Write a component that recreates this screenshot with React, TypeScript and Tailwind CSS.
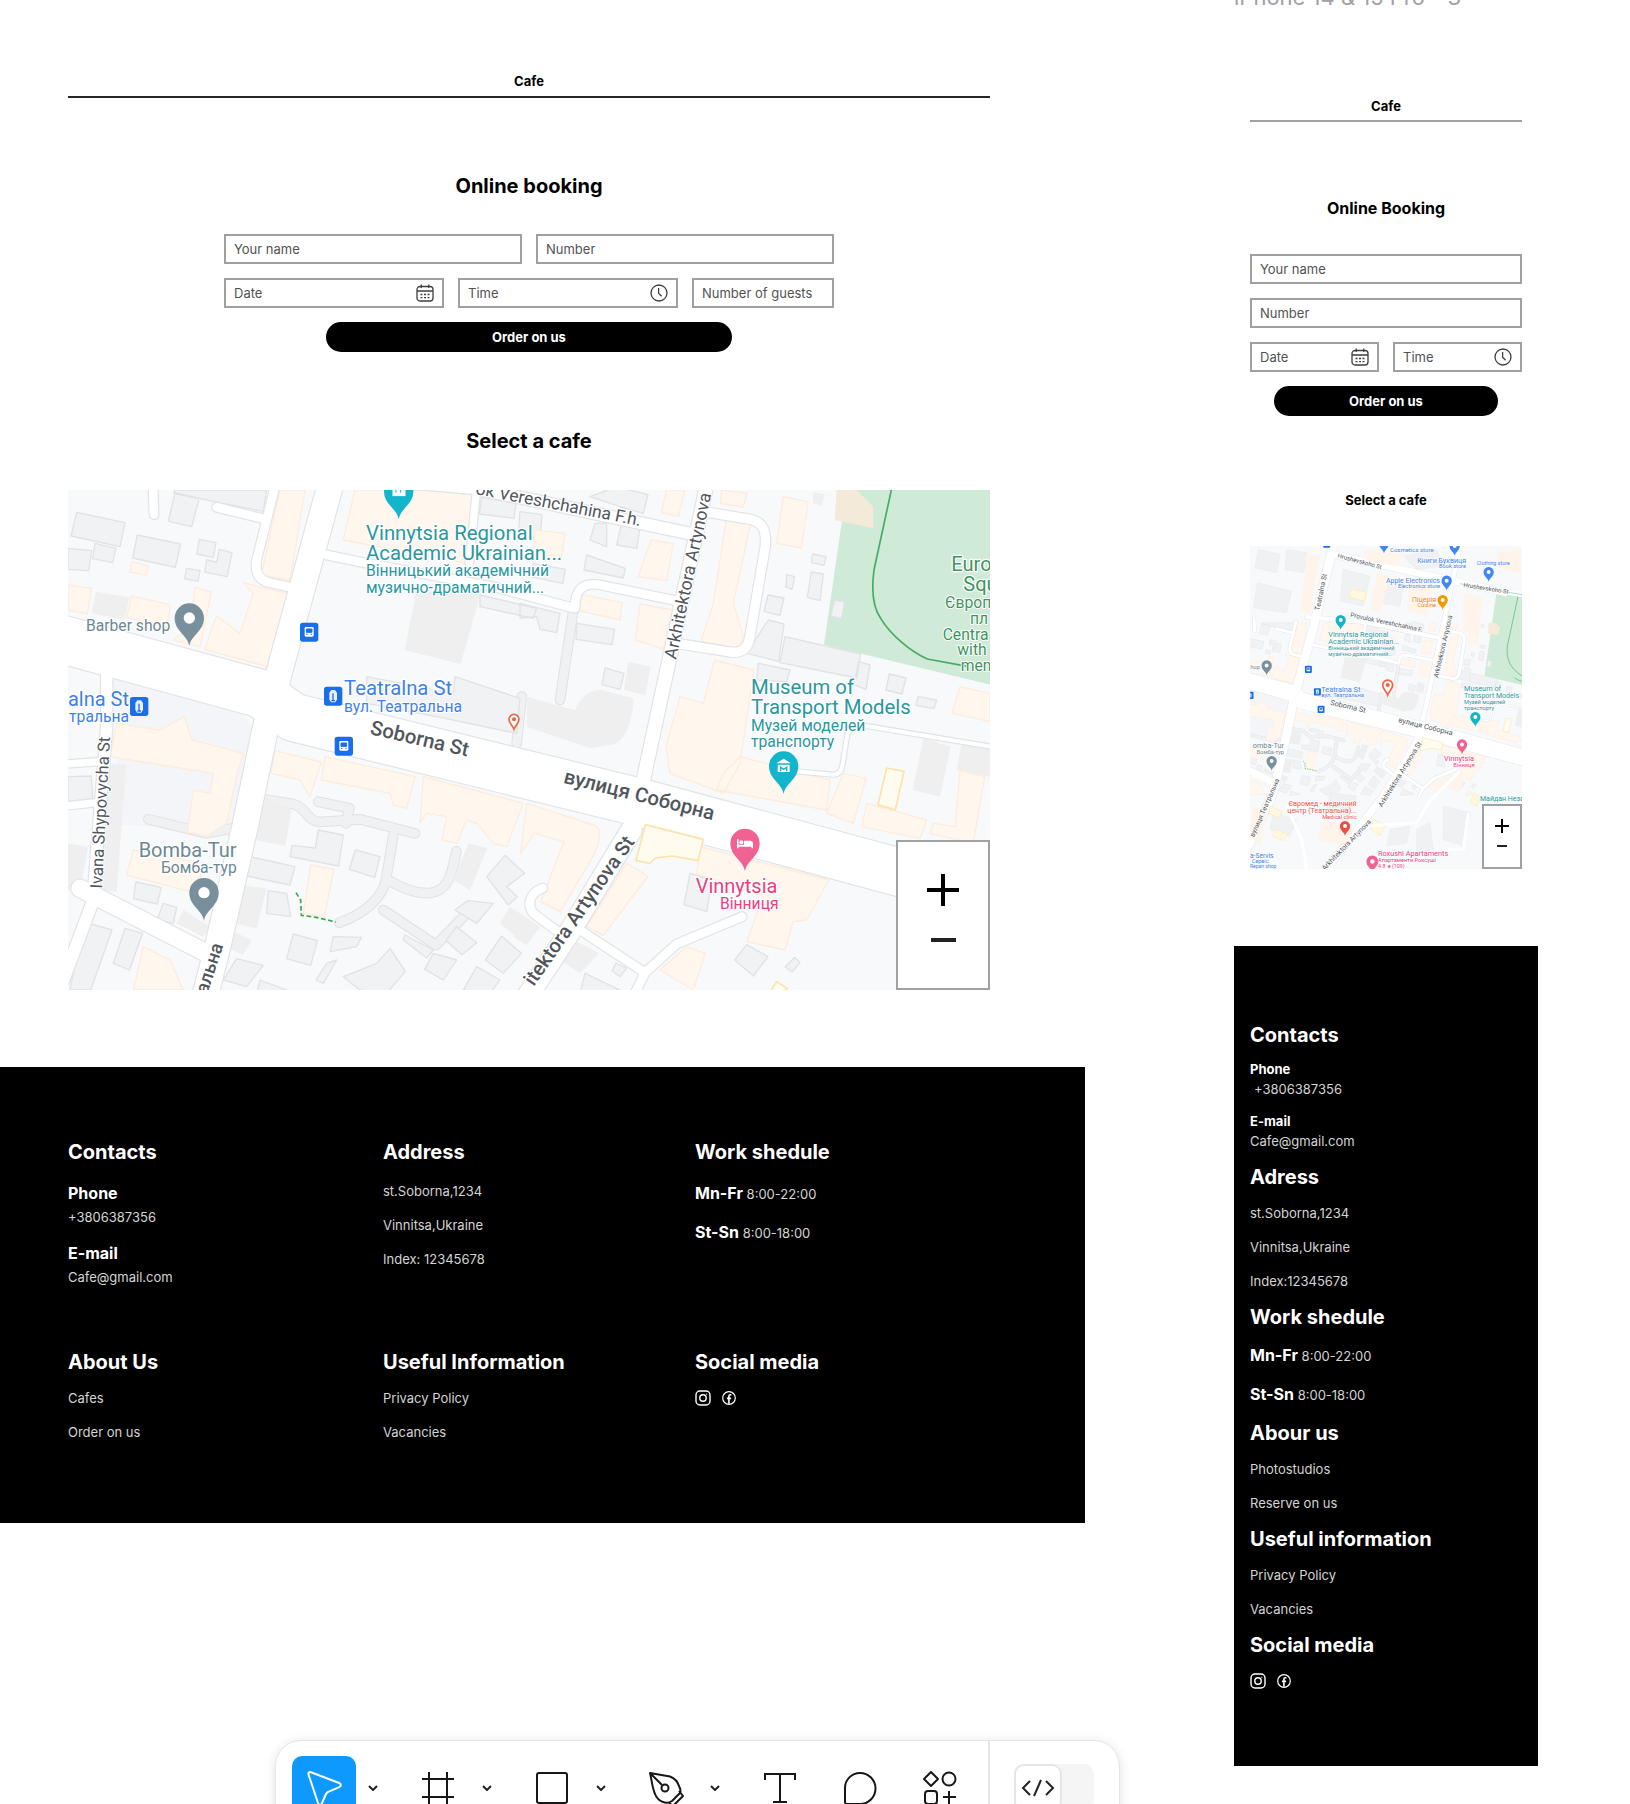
import type { ReactNode } from 'react';

interface FieldProps {
  label: string;
  icon?: ReactNode;
}

interface MapLabelProps {
  x: number;
  y: number;
  size: number;
  color: string;
  children: string;
  anchor?: 'start' | 'middle' | 'end';
  rotate?: number;
  weight?: number;
}

interface PinProps {
  x: number;
  y: number;
  color: string;
  scale?: number;
  children?: ReactNode;
}

const TEAL = '#2a979f';
const TEAL_PIN = '#12b5cb';
const SLATE = '#6b8793';
const BLUE = '#3f7fe8';
const PINK = '#ea4080';
const GREEN = '#3f9461';
const ROAD_TEXT = '#51565c';

/* ---------- icons ---------- */

function CalendarIcon() {
  return (
    <svg viewBox="0 0 18 18" className="h-[18px] w-[18px] shrink-0" fill="none" stroke="#3f3f3f" strokeWidth="1.3">
      <rect x="1" y="2.5" width="16" height="14.5" rx="3" />
      <path d="M1 7h16M5.2 0.5v3.5M12.8 0.5v3.5" />
      <path d="M4.5 10.5h2M8 10.5h2M11.5 10.5h2M4.5 13.7h2M8 13.7h2M11.5 13.7h2" />
    </svg>
  );
}

function ClockIcon() {
  return (
    <svg viewBox="0 0 18 18" className="h-[18px] w-[18px] shrink-0" fill="none" stroke="#3f3f3f" strokeWidth="1.3">
      <circle cx="9" cy="9" r="8" />
      <path d="M8.6 4v5.2l3 3" />
    </svg>
  );
}

function InstagramIcon() {
  return (
    <svg viewBox="0 0 16 16" className="h-4 w-4" fill="none" stroke="white" strokeWidth="1.4">
      <rect x="1" y="1" width="14" height="14" rx="4" />
      <circle cx="8" cy="8" r="3.2" />
      <circle cx="11.8" cy="4.2" r="0.6" fill="white" stroke="none" />
    </svg>
  );
}

function FacebookIcon() {
  return (
    <svg viewBox="0 0 16 16" className="h-4 w-4" fill="none" stroke="white" strokeWidth="1.2">
      <circle cx="8" cy="8" r="6.3" />
      <path d="M10.4 4.8H9.3c-.9 0-1.4.5-1.4 1.4v7.6M5.9 8.4h4.2" strokeWidth="1.6" />
    </svg>
  );
}

/* ---------- map ---------- */

function MapLabel({ x, y, size, color, children, anchor = 'start', rotate = 0, weight = 400 }: MapLabelProps) {
  return (
    <text
      x={x}
      y={y}
      fontSize={size}
      fontWeight={weight}
      fill={color}
      textAnchor={anchor}
      stroke="white"
      strokeWidth={size / 8}
      strokeLinejoin="round"
      paintOrder="stroke"
      transform={rotate ? `rotate(${rotate} ${x} ${y})` : undefined}
    >
      {children}
    </text>
  );
}

// x, y is the centre of the round head
function Pin({ x, y, color, scale = 1, children }: PinProps) {
  return (
    <g transform={`translate(${x} ${y}) scale(${scale})`}>
      <path d="M0 84C-6 50-44 40-44 0a44 44 0 1 1 88 0C44 40 6 50 0 84Z" fill={color} />
      {children ?? <circle r="17" fill="white" />}
    </g>
  );
}

function Stop({ x, y, scale = 1, metro = false }: { x: number; y: number; scale?: number; metro?: boolean }) {
  return (
    <g transform={`translate(${x} ${y}) scale(${scale})`}>
      <rect x="-27" y="-28" width="55" height="57" rx="8" fill="#1a6fe8" />
      {metro ? (
        <>
          <path d="M-5-18H6l6 8v20l-5 9H-6l-5-9v-20z" fill="white" opacity=".9" />
          <path d="M0-8v20M-5 14h11" stroke="#1a6fe8" strokeWidth="4" />
        </>
      ) : (
        <>
          <rect x="-13" y="-15" width="27" height="29" rx="4" fill="white" />
          <path d="M-8-9H9V1H-8zM-8 7h4M5 7h4" fill="#1a6fe8" stroke="#1a6fe8" strokeWidth="3" />
        </>
      )}
    </g>
  );
}

function CafeMarker({ x, y, scale = 1 }: { x: number; y: number; scale?: number }) {
  return (
    <g transform={`translate(${x} ${y}) scale(${scale})`}>
      <path d="M0 26C-4 14-15 8-15-4a15 15 0 1 1 30 0C15 8 4 14 0 26Z" fill="white" stroke="#f2623f" strokeWidth="5" />
      <circle cy="-4" r="6" fill="#f2623f" />
    </g>
  );
}

const roads = [
  { d: 'M-300 400 24 483 600 640 700 712 1730 965 2790 1250', w: 142 },
  { d: 'M971-650 807 30 650 605 613 760 555 1040 474 1395 440 1530 242 1953 60 2300', w: 76 },
  { d: 'M2079-650 1933 50 1750 900', w: 40 },
  { d: 'M1714 1050 1520 1370 1395 1560 912 2186', w: 62 },
  { d: 'M971-568 2620-204', w: 60 },
  { d: 'M740-20 1250 25 1910 165', w: 36 },
  { d: 'M1250 25 1228 250', w: 22 },
  { d: 'M800 225 920 250 1300 320 1540 384', w: 26 },
  { d: 'M1545 384c0-50 20-78 72-70l240 50', w: 26 },
  { d: 'M1950 98 2070 118c36 8 50 30 46 80l-46 270c-6 42-30 52-60 48l-160-26', w: 28 },
  { d: 'M278-10 282 104', w: 26 },
  { d: 'M470 82 610 116', w: 26 },
  { d: 'M645 20 590 240c-6 40 8 62 40 68l60 14', w: 26 },
  { d: 'M140 560 140 740 100 1240', w: 34 },
  { d: 'M-100 860 120 845M-100 990 112 968', w: 22 },
  { d: 'M60 1225 440 1420', w: 52 },
  { d: 'M100 1260 10 1500', w: 36 },
  { d: 'M1490 1352 1420 1300c-20-26-12-60 28-76', w: 26 },
  { d: 'M1560 1350 1755 1478 1850 1392 2046 1310M1755 1478 1720 1550', w: 26 },
  { d: 'M2208 874 2320 884c24 0 28-20 32-60l10-60c8-24 30-30 70-24l360 60', w: 12 },
];

const alleys = [
  'M265 1018 440 1060 520 1045',
  'M610 958 700 972c40 12 40 50 80 54l120-8 165 42',
  'M775 965 868 985 858 1030',
  'M1000 1065 978 1200c-10 50-60 100-140 128',
  'M985 1200c50 30 90 44 130 38 50-8 62-60 74-124',
  'M970 1290 1128 1395 1230 1290',
  'M1540 390 1500 660',
  'M1385 650 1370 790',
];

const greyBlocks = [
  'M50 97 195 128 180 200 33 168Z', 'M345 38 418 55 395 140 325 124Z', 'M24 205 95 212 86 272 24 268Z',
  'M105 190 168 205 158 248 98 236Z', 'M232 165 362 192 346 262 218 234Z', 'M418 178 468 188 460 232 410 222Z',
  'M478 208 516 218 502 290 434 276 440 240 470 246Z', 'M380 265 420 272 414 304 374 296Z',
  'M345 30 620 30 610 94 340 40Z', 'M24 890 94 888 98 955 24 965Z', 'M228 1206 304 1222 292 1272 220 1256Z',
  'M310 1270 350 1282 340 1330 292 1318Z', 'M70 1325 156 1350 92 1530 30 1530Z', 'M195 1345 248 1360 208 1470 160 1450Z',
  'M886 1110 960 1130 944 1192 868 1168Z', 'M775 1050 850 1065 836 1158 690 1130 696 1096 766 1104Z',
  'M570 1130 705 1160 690 1215 560 1188Z', 'M625 1232 680 1240 692 1310 620 1300Z',
  'M700 1362 772 1382 752 1456 680 1436Z', 'M820 1370 904 1372 890 1400 810 1415Z',
  'M1335 1126 1394 1180 1340 1220 1372 1250 1345 1275 1280 1190Z', 'M1222 1262 1300 1270 1250 1330 1185 1290Z',
  'M1190 1340 1250 1388 1206 1424 1158 1382Z', 'M1325 1368 1384 1420 1330 1480 1276 1440Z',
  'M1250 1460 1320 1500 1290 1540 1210 1530Z', 'M990 1405 1036 1474 980 1540 900 1530 850 1490 950 1450Z',
  'M1035 1365 1120 1410 1100 1434 1030 1380Z', 'M1120 1420 1190 1440 1150 1500 1094 1468Z',
  'M830 1440 790 1510 768 1500 800 1450Z', 'M530 1436 610 1456 560 1520 490 1500Z', 'M600 1500 680 1530 590 1540Z',
  'M1265 52 1368 70 1362 115 1258 102Z', 'M1380 95 1446 104 1440 180 1375 165Z', 'M1590 50 1670 20 1764 44 1750 100 1680 80Z',
  'M1605 130 1640 130 1640 200 1590 180Z', 'M1685 130 1740 142 1730 205 1670 195Z',
  'M1580 225 1696 265 1690 294 1572 270Z', 'M1420 250 1516 268 1508 310 1410 290Z',
  'M1380 370 1500 400 1490 458 1440 448 1430 410 1380 415Z', 'M1550 430 1664 448 1656 494 1548 478Z',
  'M1635 564 1692 580 1680 628 1626 614Z', 'M2258 222 2298 230 2292 256 2254 248Z', 'M2180 284 2204 290 2196 328 2178 320Z',
  'M2254 276 2290 282 2280 362 2242 352Z', 'M2124 345 2172 354 2160 406 2112 394Z', 'M2324 360 2354 366 2344 416 2312 408Z',
  'M2125 420 2172 432 2156 544 2060 520Z', 'M2175 470 2402 522 2390 594 2160 548Z', 'M2396 545 2430 555 2418 628 2382 615Z',
  'M2095 550 2190 570 2180 605 2090 600Z', 'M2488 582 2538 594 2526 642 2478 630Z', 'M2574 650 2630 660 2622 686 2568 676Z',
  'M1185 590 1380 655 1370 760 1130 710 920 670 920 590 1180 640Z', 'M1260 345 1430 385 1420 415 1260 380Z',
  'M1890 1180 1956 1200 1940 1295 1872 1274Z', 'M2060 1394 2124 1430 2080 1488 2024 1440Z', 'M2204 1432 2220 1448 2196 1476 2176 1460Z',
  'M1575 1480 1680 1530 1560 1540Z', 'M1668 1450 1700 1464 1680 1490 1656 1472Z',
];

const plainBlocks = [
  'M108 335 208 352 194 420 94 400Z', 'M1070 330 1262 340 1202 552 1034 510Z', 'M24 1090 84 1100 60 1240 24 1230Z',
  'M150 850 198 855 170 1236 120 1230Z', 'M600 940 694 990 676 1098 584 1080Z', 'M545 1215 620 1225 590 1345 520 1330Z',
  'M370 1290 450 1340 430 1370 350 1330Z', 'M1226 1090 1282 1104 1230 1230 1180 1200Z', 'M1350 1280 1440 1340 1400 1396 1320 1330Z',
  'M520 1355 576 1380 548 1425 500 1400Z', 'M1705 545 1772 560 1756 646 1692 630Z',
  'M1400 650 1545 690c20-50 60-70 100-55l75 20c0 60-25 140-70 140l-60 10-190-65Z',
  'M2590 775 2672 800 2640 950 2558 930Z', 'M2706 780 2790 800 2790 890 2690 870Z', 'M1540 1380 1618 1420 1560 1480 1500 1440Z',
  'M2260 36 2294 42 2286 78 2258 70Z', 'M1380 1310 1435 1340 1400 1396 1360 1370Z',
];

const peachBlocks = [
  'M660 30 735 30 690 300 604 285Z', 'M885 30 1240 30 1222 250 850 180Z', 'M24 315 95 325 82 402 24 390Z',
  'M215 348 330 374 325 444 200 412Z', 'M405 322 454 336 420 500 340 480 390 440Z', 'M550 308 685 342 622 560 434 508 470 408 540 460 580 340Z',
  'M216 245 264 258 258 286 210 276Z', 'M170 730 300 750 372 710 396 780 550 820 530 885 500 1030 440 1068 382 1056 400 930 450 940 460 880 150 830Z',
  'M645 812 784 846 750 950 720 900 632 880Z', 'M795 830 1066 890 1040 985 1000 975 990 940 784 900Z',
  'M1090 890 1390 970 1340 1100 1300 1090 1250 1030 1220 1020 1190 1090 1146 1080 1160 1010 1100 1000 1080 1028Z',
  'M1400 970 1600 1035c30 10 20 60-10 110l-90 150-58-30 70-180-90-25-40 60Z', 'M220 1110 430 1150 410 1240 200 1185Z',
  'M752 1155 822 1168 792 1312 730 1300Z', 'M250 1400 330 1440 370 1530 220 1530Z', 'M1425 150 1515 160 1505 230 1420 220Z',
  'M1820 30 1874 30 1856 110 1804 98Z', 'M1774 180 1840 190 1820 302 1734 290Z', 'M1550 340 1686 368 1680 420 1548 390Z',
  'M1740 372 1840 390 1810 508 1726 480Z', 'M2000 110 2074 120 2020 370 2050 470 2030 520 1920 492 1960 370Z',
  'M2170 50 2244 65 2224 204 2150 190Z', 'M1985 30 2060 40 2050 82 1982 70Z', 'M1964 540 2082 570 2040 850 1990 940 1830 880 1818 800 1860 650 1930 670Z',
  'M2040 830 2310 900 2300 990 1970 930 1990 880Z', 'M2350 880 2418 895 2380 1030 2300 1000Z', 'M2420 970 2600 1020 2580 1075 2406 1040Z',
  'M2700 620 2790 640 2790 725 2676 700Z', 'M2700 870 2774 890 2740 1090 2610 1060 2620 1030 2686 1040Z',
  'M1920 1100 2306 1200 2240 1320 2200 1325 2175 1410 2060 1385 2110 1250 1910 1180Z', 'M1700 1150 1764 1188 1630 1366 1580 1340Z',
  'M1880 1400 1936 1420 1900 1530 1850 1500 1800 1470Z',
];

const yellowBlocks = [
  'M1756 1034 1930 1078 1914 1142 1836 1128 1786 1134 1770 1150 1728 1142Z',
  'M2480 864 2532 874 2506 990 2454 974Z',
  'M2150 1505 2182 1525 2160 1540 2130 1535Z',
];

// Street geometry shared by the wide map and the phone map
function Streets() {
  return (
    <g strokeLinejoin="round">
      <path d="M160 592 545 698 582 745 520 1050 180 1035Z" fill="#f4f5f8" />
      <path d="M2400-250 2900-200V640L2292 494Z" fill="#cfead6" />
      <path d="M2494-50 2494 30 2442 270c-8 60-4 110 20 145 30 50 90 100 140 122l120 22" fill="none" stroke="#46a967" strokeWidth="5" />
      <path d="M2330 30 2390 30 2440 80 2440 145 2324 120Z" fill="#f3ead9" />
      <g fill="none" strokeLinecap="round">
        {alleys.map((d) => <path key={d} d={d} stroke="#dfe1e5" strokeWidth="32" />)}
        {alleys.map((d) => <path key={d} d={d} stroke="#f0f1f3" strokeWidth="26" />)}
      </g>
      <path d={plainBlocks.join('')} fill="#efefef" />
      <path d={greyBlocks.join('')} fill="#f1f2f4" stroke="#e0e2e6" strokeWidth="4" />
      <path d={peachBlocks.join('')} fill="#fff6ee" stroke="#fdecdc" strokeWidth="4" />
      <path d="M708 1238 722 1260 724 1306 768 1312 828 1326" fill="none" stroke="#34a853" strokeWidth="5" strokeDasharray="14 8" />
      <g fill="none" strokeLinecap="round">
        {roads.map((r) => <path key={r.d} d={r.d} stroke="#e0e3e7" strokeWidth={r.w + 7} />)}
        {roads.map((r) => <path key={r.d} d={r.d} stroke="white" strokeWidth={r.w} />)}
      </g>
      <path d={yellowBlocks.join('')} fill="#fffbee" stroke="#fbe3ac" strokeWidth="5" />
    </g>
  );
}

function WideMap() {
  return (
    <svg viewBox="24 30 2766 1500" preserveAspectRatio="xMidYMid slice" className="block h-full w-full bg-[#f8f9fb] font-['Roboto',sans-serif]">
      <Streets />

      <MapLabel x={1740} y={138} size={52} color={ROAD_TEXT} anchor="end" rotate={11}>ок Vereshchahina F.h.</MapLabel>
      <MapLabel x={1848} y={540} size={53} color={ROAD_TEXT} rotate={-78}>Arkhitektora Artynova</MapLabel>
      <MapLabel x={1726} y={1086} size={60} color={ROAD_TEXT} anchor="end" rotate={-55} weight={500}>itektora Artynova St</MapLabel>
      <MapLabel x={126} y={1226} size={50} color={ROAD_TEXT} rotate={-87}>Ivana Shypovycha St</MapLabel>
      <MapLabel x={490} y={1396} size={56} color={ROAD_TEXT} anchor="end" rotate={-72} weight={500}>альна</MapLabel>
      <MapLabel x={928} y={762} size={61} color={ROAD_TEXT} rotate={13} weight={500}>Soborna St</MapLabel>
      <MapLabel x={1508} y={908} size={61} color={ROAD_TEXT} rotate={14} weight={500}>вулиця Соборна</MapLabel>

      <Pin x={1016} y={34} color={TEAL_PIN}>
        <path d="M-20-12H16v8l6-4V16H-20ZM-8-4v8M6-4v8" fill="white" stroke={TEAL_PIN} strokeWidth="3" />
      </Pin>
      <MapLabel x={918} y={180} size={61} color={TEAL}>Vinnytsia Regional</MapLabel>
      <MapLabel x={918} y={240} size={61} color={TEAL}>Academic Ukrainian...</MapLabel>
      <MapLabel x={918} y={289} size={47} color={TEAL}>Вінницький академічний</MapLabel>
      <MapLabel x={918} y={338} size={47} color={TEAL}>музично-драматичний...</MapLabel>

      <MapLabel x={78} y={452} size={47} color={SLATE}>Barber shop</MapLabel>
      <Pin x={388} y={414} color="#78909c" />
      <MapLabel x={236} y={1130} size={60} color={SLATE}>Bomba-Tur</MapLabel>
      <MapLabel x={303} y={1179} size={47} color={SLATE}>Бомба-тур</MapLabel>
      <Pin x={432} y={1238} color="#78909c" />

      <Stop x={747} y={456} />
      <Stop x={851} y={798} />
      <Stop x={819} y={648} metro />
      <Stop x={237} y={679} metro />
      <MapLabel x={852} y={646} size={61} color={BLUE}>Teatralna St</MapLabel>
      <MapLabel x={852} y={696} size={47} color={BLUE}>вул. Театральна</MapLabel>
      <MapLabel x={207} y={677} size={60} color={BLUE} anchor="end">alna St</MapLabel>
      <MapLabel x={207} y={727} size={47} color={BLUE} anchor="end">тральна</MapLabel>
      <CafeMarker x={1362} y={722} />

      <MapLabel x={2073} y={642} size={61} color={TEAL}>Museum of</MapLabel>
      <MapLabel x={2073} y={702} size={61} color={TEAL}>Transport Models</MapLabel>
      <MapLabel x={2073} y={752} size={47} color={TEAL}>Музей моделей</MapLabel>
      <MapLabel x={2073} y={800} size={47} color={TEAL}>транспорту</MapLabel>
      <Pin x={2171} y={858} color={TEAL_PIN}>
        <path d="M-22-8 0-22 22-8ZM-18-4H18V18H-18Z" fill="white" />
        <path d="M-9 16V4L0 10 9 4V16" fill="none" stroke={TEAL_PIN} strokeWidth="4" />
      </Pin>

      <Pin x={2055} y={1090} color="#f06292">
        <path d="M-24-12h5V4h16v-12h18q9 0 9 9v14h-5V10h-38v5h-5z" fill="white" />
        <circle cx="-11" cy="-3" r="6" fill="white" />
      </Pin>
      <MapLabel x={1907} y={1238} size={60} color={PINK}>Vinnytsia</MapLabel>
      <MapLabel x={1980} y={1288} size={47} color={PINK}>Вінниця</MapLabel>

      <MapLabel x={2674} y={272} size={60} color={GREEN}>Euro</MapLabel>
      <MapLabel x={2710} y={332} size={60} color={GREEN}>Squ</MapLabel>
      <MapLabel x={2655} y={384} size={47} color={GREEN}>Європ</MapLabel>
      <MapLabel x={2730} y={431} size={47} color={GREEN}>пл</MapLabel>
      <MapLabel x={2648} y={479} size={47} color={GREEN}>Centra</MapLabel>
      <MapLabel x={2692} y={526} size={47} color={GREEN}>with</MapLabel>
      <MapLabel x={2702} y={574} size={47} color={GREEN}>mem</MapLabel>
    </svg>
  );
}

function PhoneMap() {
  return (
    <svg viewBox="60 48 816 972" preserveAspectRatio="xMidYMid slice" className="block h-full w-full bg-[#f8f9fb] font-['Roboto',sans-serif]">
      <g transform="translate(-23 270) scale(.343)">
        <Streets />
      </g>
      {/* blocks north and south of the shared streets */}
      <path
        d="M85 60 150 75 140 130 75 115ZM82 160 185 185 170 250 70 235ZM170 60 230 70 222 130 165 120ZM340 120 420 140 400 230 330 215ZM450 160 520 170 510 230 440 220ZM520 80 620 60 640 110 560 120ZM130 850 200 870 180 920 120 900ZM300 790 380 800 350 880 290 850ZM480 900 540 890 530 940 470 950ZM560 900 600 880 610 960 560 970ZM640 830 720 850 700 950 640 930Z"
        fill="#f0f1f3"
        stroke="#e3e5e9"
      />
      <path
        d="M230 70 270 80 240 250 212 240ZM440 130 480 140 450 250 420 240ZM540 150 610 165 590 260 530 240ZM400 60 520 75 500 110 410 95ZM700 190 760 210 740 320 700 300ZM800 70 870 60 876 130 810 120ZM280 870 370 900 350 950 260 930ZM70 830 110 850 90 950 60 920ZM640 740 700 730 690 790 630 770Z"
        fill="#fff4ea"
      />
      <path d="M362 178 410 188 404 214 358 204ZM430 870 468 885 450 918 422 900ZM120 830 156 846 146 866 116 852ZM136 900 172 914 160 934 128 920ZM730 790 752 800 740 830 722 820Z" fill="#fff8df" stroke="#fbe8b8" strokeWidth="2" />
      <path d="M790 100H880V190H790Z" fill="#f8f9fb" />
      <path d="M800 70 870 60 876 130 810 120Z" fill="#fff4ea" />
      <path d="M832 190H880V450L782 430Z" fill="#cfead6" />
      <path d="M866 192 832 350c-4 40 8 66 44 90" fill="none" stroke="#7cc694" strokeWidth="3" />
      <path d="M60 730 130 765M425 890 470 885 560 880 600 815 690 725M170 830 215 930 230 1020M715 850 700 960 640 960" fill="none" stroke="white" strokeWidth="9" />
      <path d="M690 163 876 196" stroke="white" strokeWidth="16" />
      <path d="M690 163 876 196" stroke="#7cc694" strokeWidth="2" />

      <MapLabel x={322} y={84} size={18} color={ROAD_TEXT} rotate={15}>Hrushevskoho St</MapLabel>
      <MapLabel x={700} y={172} size={18} color={ROAD_TEXT} rotate={9}>Hrushevskoho St</MapLabel>
      <MapLabel x={268} y={244} size={21} color={ROAD_TEXT} rotate={-78}>Teatralna St</MapLabel>
      <MapLabel x={360} y={262} size={19} color={ROAD_TEXT} rotate={12}>Provulok Vereshchahina F.</MapLabel>
      <MapLabel x={624} y={446} size={20} color={ROAD_TEXT} rotate={-77}>Arkhitektora Artynova</MapLabel>
      <MapLabel x={456} y={834} size={21} color={ROAD_TEXT} rotate={-58}>Arkhitektora Artynova St</MapLabel>
      <MapLabel x={284} y={1024} size={21} color={ROAD_TEXT} rotate={-46}>Arkhitektora Artynova</MapLabel>
      <MapLabel x={72} y={924} size={21} color={ROAD_TEXT} rotate={-66}>вулиця Театральна</MapLabel>
      <MapLabel x={300} y={526} size={22} color={ROAD_TEXT} rotate={13}>Soborna St</MapLabel>
      <MapLabel x={504} y={578} size={22} color={ROAD_TEXT} rotate={14}>вулиця Соборна</MapLabel>

      <Pin x={462} y={42} color="#4285f4" scale={0.35} />
      <Pin x={674} y={50} color="#4285f4" scale={0.35} />
      <Pin x={776} y={128} color="#4285f4" scale={0.35} />
      <Pin x={650} y={154} color="#4285f4" scale={0.35} />
      <MapLabel x={480} y={68} size={18} color={BLUE}>Cosmetics store</MapLabel>
      <MapLabel x={708} y={101} size={21} color={BLUE} anchor="end">Книги Буквиця</MapLabel>
      <MapLabel x={708} y={117} size={17} color={BLUE} anchor="end">Book store</MapLabel>
      <MapLabel x={740} y={108} size={16} color={BLUE}>Clothing store</MapLabel>
      <MapLabel x={630} y={162} size={21} color={BLUE} anchor="end">Apple Electronics</MapLabel>
      <MapLabel x={630} y={177} size={17} color={BLUE} anchor="end">Electronics store</MapLabel>
      <Pin x={638} y={212} color="#f29900" scale={0.35} />
      <MapLabel x={618} y={218} size={21} color="#e8811a" anchor="end">Піцерія</MapLabel>
      <MapLabel x={618} y={234} size={17} color="#e8811a" anchor="end">Cuisine</MapLabel>

      <Pin x={332} y={272} color={TEAL_PIN} scale={0.35} />
      <MapLabel x={295} y={323} size={22} color={TEAL}>Vinnytsia Regional</MapLabel>
      <MapLabel x={295} y={344} size={22} color={TEAL}>Academic Ukrainian...</MapLabel>
      <MapLabel x={295} y={362} size={17} color={TEAL}>Вінницький академічний</MapLabel>
      <MapLabel x={295} y={380} size={17} color={TEAL}>музично-драматичний...</MapLabel>

      <Pin x={110} y={408} color="#78909c" scale={0.35} />
      <MapLabel x={90} y={418} size={17} color={SLATE} anchor="end">hop</MapLabel>
      <Pin x={125} y={695} color="#78909c" scale={0.35} />
      <MapLabel x={162} y={657} size={22} color={SLATE} anchor="end">omba-Tur</MapLabel>
      <MapLabel x={162} y={674} size={17} color={SLATE} anchor="end">Бомба-тур</MapLabel>

      <Stop x={235} y={420} scale={0.38} />
      <Stop x={273} y={540} scale={0.38} />
      <Stop x={262} y={487} scale={0.38} metro />
      <Stop x={60} y={498} scale={0.38} metro />
      <Stop x={290} y={44} scale={0.38} />
      <MapLabel x={274} y={487} size={22} color={BLUE}>Teatralna St</MapLabel>
      <MapLabel x={274} y={503} size={17} color={BLUE}>вул. Театральна</MapLabel>
      <CafeMarker x={473} y={471} />

      <MapLabel x={702} y={485} size={22} color={TEAL}>Museum of</MapLabel>
      <MapLabel x={702} y={506} size={21} color={TEAL}>Transport Models</MapLabel>
      <MapLabel x={702} y={524} size={17} color={TEAL}>Музей моделей</MapLabel>
      <MapLabel x={702} y={541} size={17} color={TEAL}>транспорту</MapLabel>
      <Pin x={736} y={563} color={TEAL_PIN} scale={0.35} />

      <Pin x={696} y={645} color="#f06292" scale={0.35} />
      <MapLabel x={642} y={696} size={22} color={PINK}>Vinnytsia</MapLabel>
      <MapLabel x={670} y={712} size={17} color={PINK}>Вінниця</MapLabel>
      <MapLabel x={750} y={815} size={21} color={TEAL}>Майдан Неза</MapLabel>

      <MapLabel x={380} y={831} size={21} color="#e5534b" anchor="end">Євромед - медичний</MapLabel>
      <MapLabel x={380} y={850} size={21} color="#e5534b" anchor="end">центр (Театральна)...</MapLabel>
      <MapLabel x={380} y={868} size={17} color="#e5534b" anchor="end">Medical clinic</MapLabel>
      <Pin x={345} y={890} color="#ea4f45" scale={0.35} />
      <Pin x={427} y={996} color="#f06292" scale={0.4} />
      <MapLabel x={444} y={980} size={22} color={PINK}>Roxushi Apartaments</MapLabel>
      <MapLabel x={444} y={998} size={17} color={PINK}>Апартаменти Роксуші</MapLabel>
      <MapLabel x={444} y={1015} size={16} color={PINK}>4.8 ★ (109)</MapLabel>
      <MapLabel x={60} y={986} size={20} color={BLUE}>a-Servis</MapLabel>
      <MapLabel x={66} y={1001} size={16} color={BLUE}>Сервіс</MapLabel>
      <MapLabel x={60} y={1016} size={15} color={BLUE}>Repair shop</MapLabel>
    </svg>
  );
}

/* ---------- booking ---------- */

function Field({ label, icon }: FieldProps) {
  return (
    <div className="flex h-[30px] min-w-0 items-center border-2 border-[#a0a0a0] pr-2">
      <input
        type="text"
        aria-label={label}
        placeholder={label}
        className="w-full min-w-0 flex-1 bg-transparent pl-2 text-[13px] leading-5 outline-none placeholder:text-neutral-600"
      />
      {icon}
    </div>
  );
}

function OrderButton({ className }: { className: string }) {
  return (
    <button type="button" className={`h-[30px] rounded-full bg-black text-[13px] leading-5 font-bold text-white ${className}`}>
      Order on us
    </button>
  );
}

/* ---------- footer ---------- */

function FooterTitle({ children }: { children: string }) {
  return <h3 className="text-xl leading-7 font-bold text-white">{children}</h3>;
}

function Lines({ items, link = false, className = 'mt-3' }: { items: string[]; link?: boolean; className?: string }) {
  return (
    <ul className={`space-y-[14px] ${className}`}>
      {items.map((item) => (
        <li key={item}>{link ? <a href="#">{item}</a> : item}</li>
      ))}
    </ul>
  );
}

function Hours({ className = 'mt-3' }: { className?: string }) {
  return (
    <ul className={`space-y-[14px] ${className}`}>
      <li className="leading-6"><b className="text-base leading-6 font-bold text-white">Mn-Fr</b> 8:00-22:00</li>
      <li className="leading-6"><b className="text-base leading-6 font-bold text-white">St-Sn</b> 8:00-18:00</li>
    </ul>
  );
}

function Social() {
  return (
    <div className="mt-[14px] flex gap-[10px]">
      <a href="#" aria-label="Instagram"><InstagramIcon /></a>
      <a href="#" aria-label="Facebook"><FacebookIcon /></a>
    </div>
  );
}

/* ---------- frames ---------- */

function DesktopFrame() {
  return (
    <section className="min-w-0">
      <div className="flex flex-col pr-[95px] pl-[68px]">
        <header className="mt-[71px] border-b-2 border-neutral-800 pb-[5px] text-center">
          <h1 className="text-[13px] leading-5 font-bold">Cafe</h1>
        </header>

        <h2 className="mt-[74px] text-center text-xl leading-7 font-bold">Online booking</h2>
        <form className="mx-auto mt-[34px] flex w-full max-w-[610px] flex-col gap-[14px]">
          <div className="grid grid-cols-2 gap-[14px]">
            <Field label="Your name" />
            <Field label="Number" />
          </div>
          <div className="grid grid-cols-[220fr_220fr_142fr] gap-[14px]">
            <Field label="Date" icon={<CalendarIcon />} />
            <Field label="Time" icon={<ClockIcon />} />
            <Field label="Number of guests" />
          </div>
          <OrderButton className="mx-auto w-2/3" />
        </form>

        <h2 className="mt-[75px] text-center text-xl leading-7 font-bold">Select a cafe</h2>
        <div className="relative mt-[35px] aspect-[922/500] overflow-hidden">
          <WideMap />
          <div className="absolute right-0 bottom-0 flex h-[150px] w-[94px] flex-col items-center justify-center gap-2 border-2 border-neutral-400 bg-white">
            <button type="button" aria-label="Zoom in" className="p-1">
              <svg viewBox="0 0 34 34" className="h-[34px] w-[34px]"><path d="M17 1v32M1 17h32" stroke="black" strokeWidth="4" /></svg>
            </button>
            <button type="button" aria-label="Zoom out" className="p-1">
              <svg viewBox="0 0 34 34" className="h-[34px] w-[34px]"><path d="M5 17h25" stroke="#222" strokeWidth="4" /></svg>
            </button>
          </div>
        </div>
      </div>

      <footer className="mt-[77px] bg-black pt-[71px] pr-[95px] pb-[81px] pl-[68px] text-[13px] leading-5 text-neutral-300">
        <div className="grid grid-cols-[315fr_312fr_295fr] gap-y-[61px]">
          <div>
            <FooterTitle>Contacts</FooterTitle>
            <h4 className="mt-[15px] text-base leading-6 font-bold text-white">Phone</h4>
            <p className="mt-[2px]">+3806387356</p>
            <h4 className="mt-[14px] text-base leading-6 font-bold text-white">E-mail</h4>
            <p className="mt-[2px]">Cafe@gmail.com</p>
          </div>
          <div>
            <FooterTitle>Address</FooterTitle>
            <Lines className="mt-[15px]" items={['st.Soborna,1234', 'Vinnitsa,Ukraine', 'Index: 12345678']} />
          </div>
          <div>
            <FooterTitle>Work shedule</FooterTitle>
            <Hours className="mt-[15px]" />
          </div>
          <div>
            <FooterTitle>About Us</FooterTitle>
            <Lines link items={['Cafes', 'Order on us']} />
          </div>
          <div>
            <FooterTitle>Useful Information</FooterTitle>
            <Lines link items={['Privacy Policy', 'Vacancies']} />
          </div>
          <div>
            <FooterTitle>Social media</FooterTitle>
            <Social />
          </div>
        </div>
      </footer>
    </section>
  );
}

function PhoneFrame() {
  return (
    <section className="col-start-3 min-w-0">
      <div className="flex h-[7px] items-end overflow-hidden">
        <p className="text-[22px] leading-5 whitespace-nowrap text-neutral-400">iPhone 14 &amp; 15 Pro - 3</p>
      </div>

      <div className="flex flex-col px-4">
        <header className="mt-[89px] border-b-2 border-neutral-400 pb-1 text-center">
          <h1 className="text-[13px] leading-5 font-bold">Cafe</h1>
        </header>

        <h2 className="mt-[72px] text-center text-base leading-7 font-bold">Online Booking</h2>
        <form className="mt-8 flex flex-col gap-[14px]">
          <Field label="Your name" />
          <Field label="Number" />
          <div className="grid grid-cols-2 gap-[14px]">
            <Field label="Date" icon={<CalendarIcon />} />
            <Field label="Time" icon={<ClockIcon />} />
          </div>
          <OrderButton className="mx-6" />
        </form>

        <h2 className="mt-[74px] text-center text-[13px] leading-5 font-bold">Select a cafe</h2>
        <div className="relative mt-9 aspect-[273/324] overflow-hidden">
          <PhoneMap />
          <div className="absolute right-0 bottom-0 flex h-[65px] w-10 flex-col items-center justify-center gap-1 border-2 border-neutral-400 bg-white">
            <button type="button" aria-label="Zoom in">
              <svg viewBox="0 0 16 16" className="h-4 w-4"><path d="M8 1v14M1 8h14" stroke="black" strokeWidth="2" /></svg>
            </button>
            <button type="button" aria-label="Zoom out">
              <svg viewBox="0 0 16 16" className="h-4 w-4"><path d="M3 8h10" stroke="#222" strokeWidth="2" /></svg>
            </button>
          </div>
        </div>
      </div>

      <footer className="mt-[77px] flex flex-col gap-3 bg-black px-4 pt-[75px] pb-[77px] text-[13px] leading-5 text-neutral-300">
        <div>
          <FooterTitle>Contacts</FooterTitle>
          <h4 className="mt-[10px] font-bold text-white">Phone</h4>
          <p className="pl-1">+3806387356</p>
          <h4 className="mt-3 font-bold text-white">E-mail</h4>
          <p>Cafe@gmail.com</p>
        </div>
        <div>
          <FooterTitle>Adress</FooterTitle>
          <Lines items={['st.Soborna,1234', 'Vinnitsa,Ukraine', 'Index:12345678']} />
        </div>
        <div>
          <FooterTitle>Work shedule</FooterTitle>
          <Hours />
        </div>
        <div>
          <FooterTitle>Abour us</FooterTitle>
          <Lines link items={['Photostudios', 'Reserve on us']} />
        </div>
        <div>
          <FooterTitle>Useful information</FooterTitle>
          <Lines link items={['Privacy Policy', 'Vacancies']} />
        </div>
        <div>
          <FooterTitle>Social media</FooterTitle>
          <Social />
        </div>
      </footer>
    </section>
  );
}

/* ---------- toolbar ---------- */

function ToolButton({ label, active = false, children }: { label: string; active?: boolean; children: ReactNode }) {
  return (
    <button
      type="button"
      aria-label={label}
      className={`flex h-16 w-16 items-center justify-center rounded-[10px] ${active ? 'bg-[#0d99ff] text-white' : 'text-neutral-900'}`}
    >
      <svg viewBox="0 0 48 48" className="h-12 w-12" fill="none" stroke="currentColor" strokeWidth="2" strokeLinejoin="round">
        {children}
      </svg>
    </button>
  );
}

function ToolMenu({ label }: { label: string }) {
  return (
    <button type="button" aria-label={label} className="mr-4 flex h-16 w-[34px] items-center justify-center">
      <svg viewBox="0 0 10 6" className="h-[6px] w-[10px]" fill="none" stroke="#222" strokeWidth="2"><path d="m1 1 4 4 4-4" /></svg>
    </button>
  );
}

function Toolbar() {
  return (
    <div className="fixed -bottom-8 left-[275px] flex h-24 items-center rounded-[26px] border border-neutral-200 bg-white pr-[25px] pl-4 shadow-[0_2px_12px_rgba(0,0,0,0.12)]">
      <ToolButton label="Move" active>
        <path d="M8.5 10.5 18 39c.8 2 3.2 2 4 0l4-9c.6-1.200 1-1.600 2.200-2.200l11-4.600c2.200-1 2.200-3.400 0-4.200L11 8.300c-1.700-.6-3 .6-2.500 2.200Z" />
      </ToolButton>
      <ToolMenu label="Move tools" />
      <ToolButton label="Frame"><path d="M15 8v32M33 8v32M8 15h32M8 33h32" /></ToolButton>
      <ToolMenu label="Region tools" />
      <ToolButton label="Rectangle"><rect x="9" y="9" width="30" height="30" rx="2" /></ToolButton>
      <ToolMenu label="Shape tools" />
      <ToolButton label="Pen">
        <path d="M8 9c2 8 2 14 5 21 1.500 4 4 6.500 8 8 3 1.200 6 1 9-1l8-8c1.500-2 0-5-1-7-1.500-5-4-7.500-9-9.500L8 9ZM8 9l12 12" />
        <circle cx="23" cy="24" r="3.500" />
        <path d="m37 27 4 5-10 10-4-3" />
      </ToolButton>
      <ToolMenu label="Drawing tools" />
      <div className="mr-4 flex gap-4">
        <ToolButton label="Text"><path d="M9 16v-6h30v6M24 10v28M17 38h14" strokeLinejoin="miter" /></ToolButton>
        <ToolButton label="Comment"><path d="M24 9a15.500 15.500 0 1 1 0 31H11q-2 0-2-2V24A15 15 0 0 1 24 9Z" /></ToolButton>
        <ToolButton label="Actions">
          <path d="m15 8 7 7-7 7-7-7ZM33 27v13M27 33h13" />
          <circle cx="33" cy="15" r="6.500" />
          <rect x="9" y="27" width="12" height="13" rx="3" />
        </ToolButton>
      </div>
      <div className="h-full w-[2px] bg-neutral-200" />
      <button type="button" aria-label="Dev Mode" className="ml-6 flex h-12 w-20 rounded-[10px] bg-neutral-100">
        <span className="flex h-12 w-12 items-center justify-center rounded-[10px] border-2 border-neutral-200 bg-white">
          <svg viewBox="0 0 34 20" className="h-5 w-[34px]" fill="none" stroke="#222" strokeWidth="2">
            <path d="m9 3-7 7 7 7M25 3l7 7-7 7M20 2l-7 16" />
          </svg>
        </span>
      </button>
    </div>
  );
}

export default function App() {
  return (
    <main className="min-h-screen bg-white font-['Inter',sans-serif] text-black">
      <div className="grid grid-cols-[1085fr_149fr_304fr_92fr]">
        <DesktopFrame />
        <PhoneFrame />
      </div>
      <Toolbar />
    </main>
  );
}
